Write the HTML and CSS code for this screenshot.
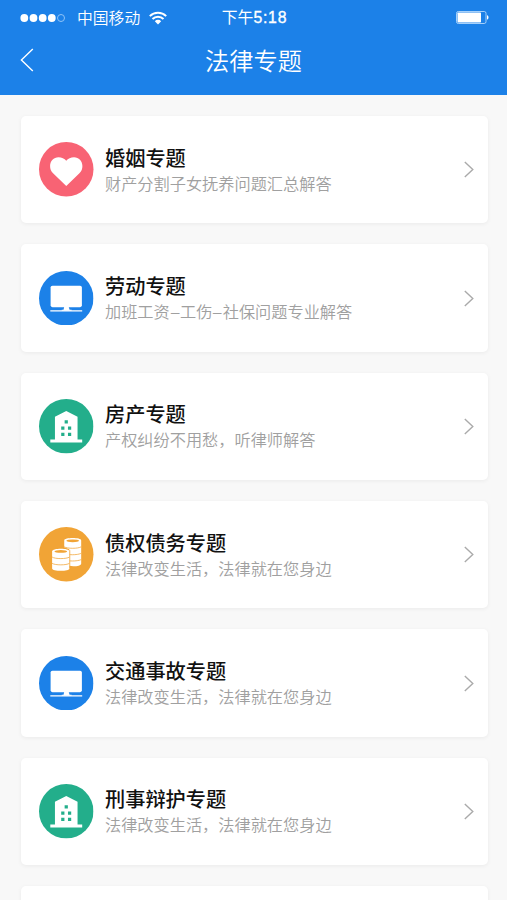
FILE: index.html
```html
<!DOCTYPE html>
<html lang="zh-CN">
<head>
<meta charset="utf-8">
<title>法律专题</title>
<link rel="stylesheet" href="styles.css">
</head>
<body>
<svg class="defs" aria-hidden="true">
  <symbol id="monitor" viewBox="0 0 54 54">
    <circle cx="27" cy="27" r="27" fill="#1c81e8"/>
    <rect x="11.5" y="14.5" width="31" height="21.3" rx="1.8" fill="#fff"/>
    <path d="M25 35.5h4.4l.9 2.8h2v1.1H22.5v-1.1h1.8z" fill="#fff"/>
    <path d="M11.2 39.6h31.6" stroke="#fff" stroke-width="1.2"/>
  </symbol>
  <symbol id="building" viewBox="0 0 54 54">
    <circle cx="27" cy="27" r="27" fill="#23ae8b"/>
    <path d="M15.8 40.2V17.5L27 11.8l11.2 5.7v22.7h4.6V43H11.2v-2.8z" fill="#fff"/>
    <path d="M25.4 21h3.2v3.2h-3.2zM22 27.3h3.2v3.2H22zM28.7 27.3h3.2v3.2h-3.2zM22 33.5h3.2v3.2H22zM28.7 33.5h3.2v3.2h-3.2z" fill="#23ae8b"/>
  </symbol>
  <symbol id="chevron" viewBox="0 0 10 17">
    <path d="M.8 1l8 7.5-8 7.5" fill="none" stroke="#aaa" stroke-width="1.4"/>
  </symbol>
</svg>
<header class="header">
  <div class="status">
    <div class="carrier">
      <svg class="signal" width="46" height="10" viewBox="0 0 46 10"><g fill="#fff"><circle cx="4.3" cy="5" r="3.9"/><circle cx="13.5" cy="5" r="3.9"/><circle cx="22.7" cy="5" r="3.9"/><circle cx="31.8" cy="5" r="3.9"/></g><circle cx="41" cy="5" r="3.5" fill="none" stroke="#8fc3f7"/></svg>
      <span class="network">中国移动</span>
      <svg class="wifi" width="18" height="14" viewBox="0 0 18 14"><g fill="none" stroke="#fff" stroke-width="2"><path d="M.8 5.1a11.7 11.7 0 0 1 16.4 0"/><path d="M3.5 8a7.8 7.8 0 0 1 11 0"/></g><path d="M5.8 10.2a4.5 4.5 0 0 1 6.4 0L9 13.5z" fill="#fff"/></svg>
    </div>
    <span class="time">下午<span class="clock">5:18</span></span>
    <svg class="battery" width="33" height="13" viewBox="0 0 33 13"><rect x=".5" y=".5" width="29.5" height="12" rx="1.8" fill="none" stroke="#a5d0fa"/><rect x="1.5" y="1.5" width="23.5" height="10" rx=".7" fill="#fff"/><path d="M31 4.3c2 .6 2 3.8 0 4.4z" fill="#fff"/></svg>
  </div>
  <div class="navbar">
    <svg class="back" width="14" height="24" viewBox="0 0 14 24"><path d="M12.8 1L1.4 12l11.4 11" fill="none" stroke="#fff" stroke-width="1.4"/></svg>
    <h1 class="heading">法律专题</h1>
    <span></span>
  </div>
</header>
<main class="list">
  <section class="card">
    <svg class="icon" viewBox="0 0 54 54"><circle cx="27" cy="27" r="27" fill="#f86374"/><path d="M27 43.6L14.2 31.3C11.7 28.8 11 26.8 11 23.8 11 18.6 14.6 15 19.3 15c3.2 0 5.9 1.2 7.7 3.5 1.8-2.3 4.5-3.5 7.7-3.5 4.7 0 8.3 3.6 8.3 8.8 0 3-.7 5-3.2 7.5z" fill="#fff"/></svg>
    <div class="copy"><h2>婚姻专题</h2><p>财产分割子女抚养问题汇总解答</p></div>
    <svg class="chevron"><use href="#chevron"/></svg>
  </section>
  <section class="card">
    <svg class="icon"><use href="#monitor"/></svg>
    <div class="copy"><h2>劳动专题</h2><p>加班工资<span class="dash">–</span>工伤<span class="dash">–</span>社保问题专业解答</p></div>
    <svg class="chevron"><use href="#chevron"/></svg>
  </section>
  <section class="card">
    <svg class="icon"><use href="#building"/></svg>
    <div class="copy"><h2>房产专题</h2><p>产权纠纷不用愁，听律师解答</p></div>
    <svg class="chevron"><use href="#chevron"/></svg>
  </section>
  <section class="card">
    <svg class="icon" viewBox="0 0 54 54"><circle cx="27" cy="27" r="27" fill="#f1a436"/>
      <path d="M25 13.3c0-3.2 16.8-3.2 16.8 0v23c0 2.3-7 3-11.8 2.2V22l-5-2z" fill="#fff"/>
      <g fill="none" stroke="#f1a436" stroke-width=".75"><ellipse cx="33.4" cy="13.7" rx="6.3" ry="1.4" fill="#f1a436" stroke="none"/><path d="M25 19.6c3 2 13.8 2 16.8 0M30 27.3c4 .5 10-.1 11.8-1.3M30 33.5c4 .5 10-.1 11.8-1.3"/></g>
      <path d="M13 24c0-3.4 17.2-3.4 17.2 0v17.2c0 3-17.2 3-17.2 0z" fill="#fff"/>
      <g fill="none" stroke="#f1a436" stroke-width=".75"><ellipse cx="21.6" cy="24.2" rx="6.3" ry="1.4" fill="#f1a436" stroke="none"/><path d="M13 29.8c3 2 14.2 2 17.2 0M13 36c3 2 14.2 2 17.2 0M30.5 23v18"/></g>
    </svg>
    <div class="copy"><h2>债权债务专题</h2><p>法律改变生活，法律就在您身边</p></div>
    <svg class="chevron"><use href="#chevron"/></svg>
  </section>
  <section class="card">
    <svg class="icon"><use href="#monitor"/></svg>
    <div class="copy"><h2>交通事故专题</h2><p>法律改变生活，法律就在您身边</p></div>
    <svg class="chevron"><use href="#chevron"/></svg>
  </section>
  <section class="card">
    <svg class="icon"><use href="#building"/></svg>
    <div class="copy"><h2>刑事辩护专题</h2><p>法律改变生活，法律就在您身边</p></div>
    <svg class="chevron"><use href="#chevron"/></svg>
  </section>
  <section class="card"></section>
</main>
</body>
</html>
```
FILE: styles.css
```css
* { box-sizing: border-box; }
body {
  margin: 0;
  height: 900px;
  overflow: hidden;
  background: #f8f8f8;
  font-family: "Noto Sans CJK SC", sans-serif;
}
h1, h2, p { margin: 0; }
svg { display: block; flex: none; }
.defs { display: none; }
.header {
  height: 95px;
  background: #1c81e8;
  color: #fff;
}
.status {
  display: grid;
  grid-template-columns: 1fr auto 1fr;
  align-items: center;
  height: 35px;
  padding: 0 18px 0 20px;
}
.carrier { display: flex; align-items: center; }
.network {
  margin-left: 11px;
  font-size: 15.8px;
  line-height: 24px;
  font-weight: 350;
}
.wifi { margin-left: 9px; }
.time {
  font: 15.8px/24px "Liberation Sans", "Noto Sans CJK SC", sans-serif;
}
.clock {
  letter-spacing: .75px;
  -webkit-text-stroke: .35px #fff;
}
.battery { justify-self: end; }
.navbar {
  display: grid;
  grid-template-columns: 1fr auto 1fr;
  align-items: center;
  height: 49px;
  padding: 0 20px;
}
.heading {
  font-size: 24.2px;
  line-height: 36px;
  font-weight: 350;
}
.list {
  display: flex;
  flex-direction: column;
  gap: 21px;
  height: 805px;
  overflow: hidden;
  padding: 21px 19px 0 21px;
}
.card {
  display: flex;
  align-items: center;
  flex: none;
  height: 107.35px;
  padding: 0 14px 0 18px;
  border-radius: 5px;
  background: #fff;
  box-shadow: 0 1px 4px rgba(0, 0, 0, .06);
}
.icon { width: 54.5px; height: 54.5px; }
.copy { flex: 1; margin-left: 11.5px; }
.copy h2 {
  color: #111;
  font-size: 20.2px;
  line-height: 28px;
  font-weight: 500;
}
.copy p {
  margin-top: -1px;
  color: #a0a0a0;
  font-size: 16.2px;
  line-height: 25px;
  font-weight: 350;
  white-space: nowrap;
}
.dash {
  display: inline-block;
  width: 10.3px;
  text-align: center;
  transform: scaleX(1.2);
}
.chevron { width: 10px; height: 17px; }
```
